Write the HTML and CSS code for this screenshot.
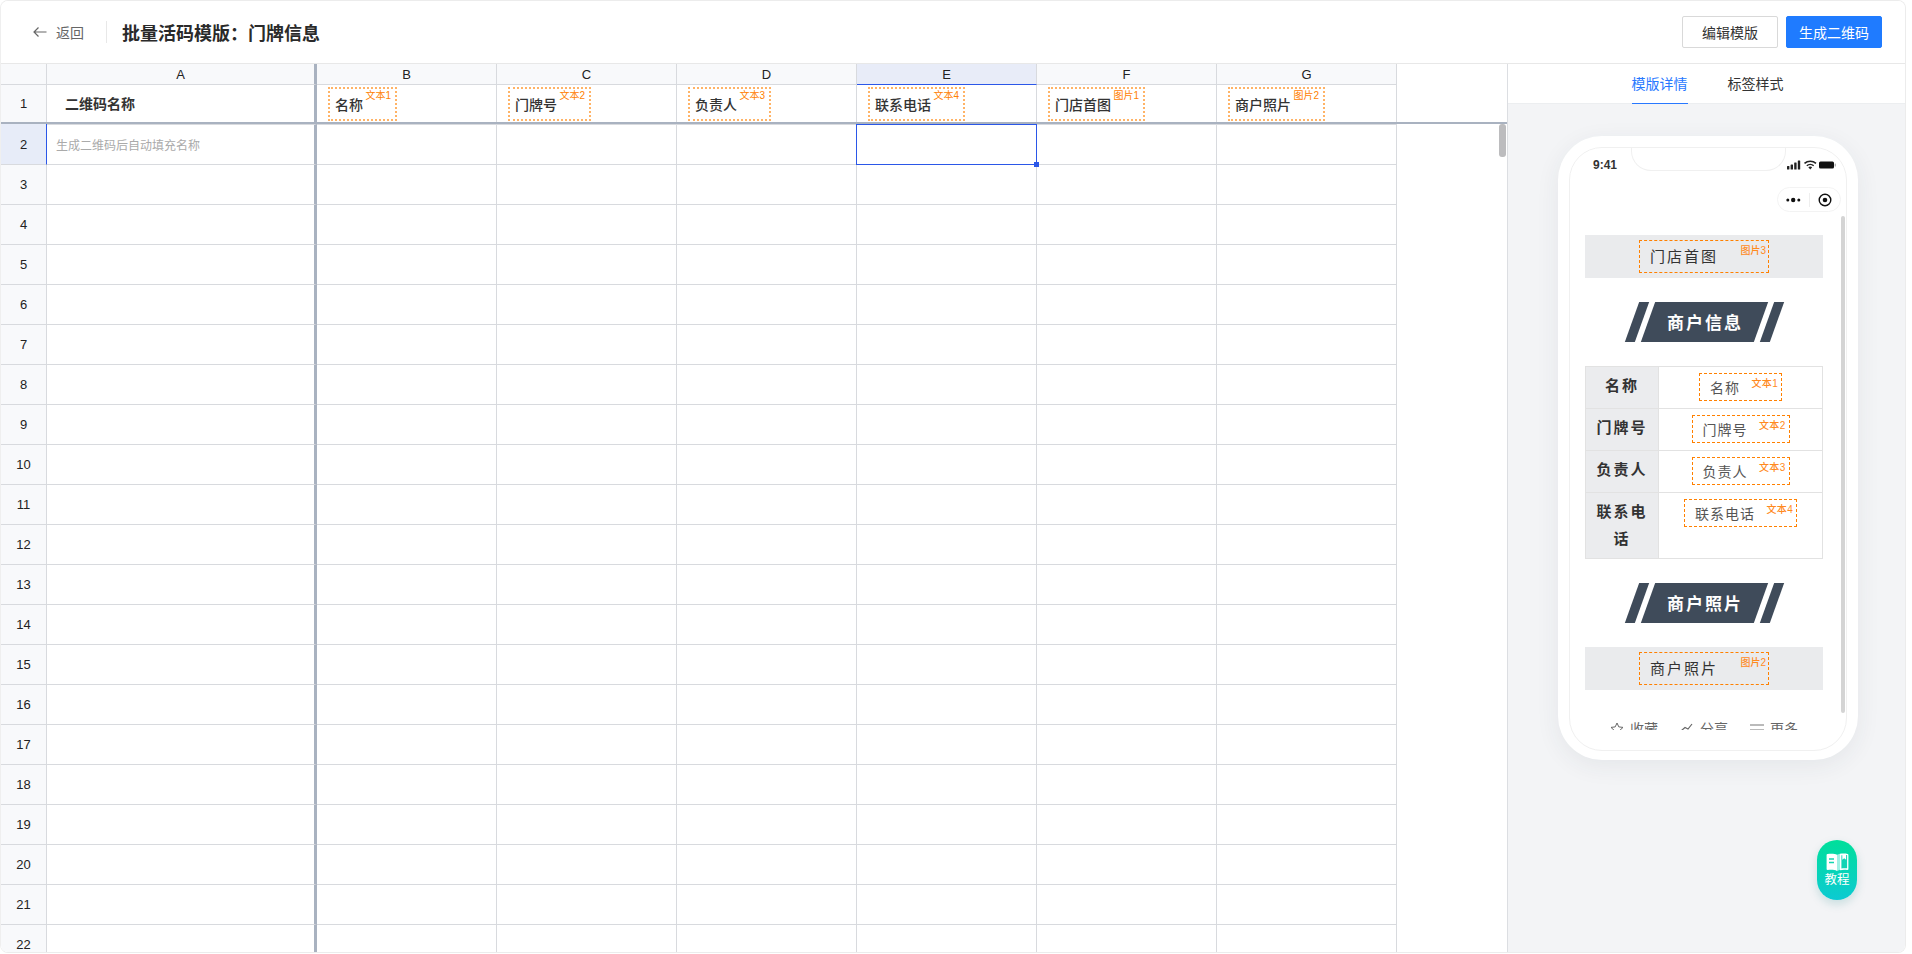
FILE: index.html
```html
<!DOCTYPE html>
<html lang="zh-CN">
<head>
<meta charset="utf-8">
<title>批量活码模版</title>
<link rel="stylesheet" href="styles.css">
</head>
<body>
<div class="app">
  <header class="top">
    <a class="back">
      <svg class="back-icon" viewBox="0 0 14 12" width="14" height="12"><path d="M13.500 6H1M5.500 1.500 1 6l4.500 4.500" fill="none" stroke="#666" stroke-width="1.200"/></svg>
      <span>返回</span>
    </a>
    <span class="divider"></span>
    <h1 class="title">批量活码模版：门牌信息</h1>
    <div class="actions">
      <button class="btn">编辑模版</button>
      <button class="btn primary">生成二维码</button>
    </div>
  </header>
  <main class="main">
    <section class="sheet">
      <div class="row head">
        <div class="rh"></div><div class="c a">A</div><div class="c">B</div><div class="c">C</div><div class="c">D</div><div class="c on">E</div><div class="c">F</div><div class="c">G</div>
      </div>
      <div class="row first">
        <div class="rh">1</div>
        <div class="c a"><span class="name">二维码名称</span></div>
        <div class="c"><span class="chip">名称<i>文本1</i></span></div>
        <div class="c"><span class="chip">门牌号<i>文本2</i></span></div>
        <div class="c"><span class="chip">负责人<i>文本3</i></span></div>
        <div class="c"><span class="chip">联系电话<i>文本4</i></span></div>
        <div class="c"><span class="chip">门店首图<i>图片1</i></span></div>
        <div class="c"><span class="chip">商户照片<i>图片2</i></span></div>
      </div>
      <div class="row second">
        <div class="rh cur">2</div>
        <div class="c a hint">生成二维码后自动填充名称</div>
        <div class="c"></div><div class="c"></div><div class="c"></div><div class="c sel"></div><div class="c"></div><div class="c"></div>
      </div>
      <div class="row"><div class="rh">3</div><div class="c a"></div><div class="c"></div><div class="c"></div><div class="c"></div><div class="c"></div><div class="c"></div><div class="c"></div></div>
      <div class="row"><div class="rh">4</div><div class="c a"></div><div class="c"></div><div class="c"></div><div class="c"></div><div class="c"></div><div class="c"></div><div class="c"></div></div>
      <div class="row"><div class="rh">5</div><div class="c a"></div><div class="c"></div><div class="c"></div><div class="c"></div><div class="c"></div><div class="c"></div><div class="c"></div></div>
      <div class="row"><div class="rh">6</div><div class="c a"></div><div class="c"></div><div class="c"></div><div class="c"></div><div class="c"></div><div class="c"></div><div class="c"></div></div>
      <div class="row"><div class="rh">7</div><div class="c a"></div><div class="c"></div><div class="c"></div><div class="c"></div><div class="c"></div><div class="c"></div><div class="c"></div></div>
      <div class="row"><div class="rh">8</div><div class="c a"></div><div class="c"></div><div class="c"></div><div class="c"></div><div class="c"></div><div class="c"></div><div class="c"></div></div>
      <div class="row"><div class="rh">9</div><div class="c a"></div><div class="c"></div><div class="c"></div><div class="c"></div><div class="c"></div><div class="c"></div><div class="c"></div></div>
      <div class="row"><div class="rh">10</div><div class="c a"></div><div class="c"></div><div class="c"></div><div class="c"></div><div class="c"></div><div class="c"></div><div class="c"></div></div>
      <div class="row"><div class="rh">11</div><div class="c a"></div><div class="c"></div><div class="c"></div><div class="c"></div><div class="c"></div><div class="c"></div><div class="c"></div></div>
      <div class="row"><div class="rh">12</div><div class="c a"></div><div class="c"></div><div class="c"></div><div class="c"></div><div class="c"></div><div class="c"></div><div class="c"></div></div>
      <div class="row"><div class="rh">13</div><div class="c a"></div><div class="c"></div><div class="c"></div><div class="c"></div><div class="c"></div><div class="c"></div><div class="c"></div></div>
      <div class="row"><div class="rh">14</div><div class="c a"></div><div class="c"></div><div class="c"></div><div class="c"></div><div class="c"></div><div class="c"></div><div class="c"></div></div>
      <div class="row"><div class="rh">15</div><div class="c a"></div><div class="c"></div><div class="c"></div><div class="c"></div><div class="c"></div><div class="c"></div><div class="c"></div></div>
      <div class="row"><div class="rh">16</div><div class="c a"></div><div class="c"></div><div class="c"></div><div class="c"></div><div class="c"></div><div class="c"></div><div class="c"></div></div>
      <div class="row"><div class="rh">17</div><div class="c a"></div><div class="c"></div><div class="c"></div><div class="c"></div><div class="c"></div><div class="c"></div><div class="c"></div></div>
      <div class="row"><div class="rh">18</div><div class="c a"></div><div class="c"></div><div class="c"></div><div class="c"></div><div class="c"></div><div class="c"></div><div class="c"></div></div>
      <div class="row"><div class="rh">19</div><div class="c a"></div><div class="c"></div><div class="c"></div><div class="c"></div><div class="c"></div><div class="c"></div><div class="c"></div></div>
      <div class="row"><div class="rh">20</div><div class="c a"></div><div class="c"></div><div class="c"></div><div class="c"></div><div class="c"></div><div class="c"></div><div class="c"></div></div>
      <div class="row"><div class="rh">21</div><div class="c a"></div><div class="c"></div><div class="c"></div><div class="c"></div><div class="c"></div><div class="c"></div><div class="c"></div></div>
      <div class="row"><div class="rh">22</div><div class="c a"></div><div class="c"></div><div class="c"></div><div class="c"></div><div class="c"></div><div class="c"></div><div class="c"></div></div>
      <div class="sheet-thumb"></div>
    </section>
    <aside class="panel">
      <nav class="tabs">
        <span class="tab active">模版详情</span>
        <span class="tab">标签样式</span>
      </nav>
      <div class="phone">
        <div class="screen">
          <div class="notch"></div>
          <div class="status">
            <span class="time">9:41</span>
            <svg width="50" height="10" viewBox="0 0 50 10">
              <g fill="#222"><rect x="0" y="6" width="2.400" height="3.500" rx=".5"/><rect x="3.600" y="4.500" width="2.400" height="5" rx=".5"/><rect x="7.200" y="2.500" width="2.400" height="7" rx=".5"/><rect x="10.800" y="0.500" width="2.400" height="9" rx=".5"/></g>
              <path d="M17.500 3.400a8.500 8.500 0 0 1 11.500 0M19.800 5.800a5 5 0 0 1 6.900 0" fill="none" stroke="#222" stroke-width="1.500"/><path d="M21.300 7.300a3 3 0 0 1 3.900 0L23.250 9.500z" fill="#222"/>
              <rect x="32" y="1.500" width="15" height="7" rx="1.500" fill="#111"/><rect x="47.600" y="3.500" width="1.300" height="3" rx=".6" fill="#aaa"/>
            </svg>
          </div>
          <div class="nav">
            <div class="capsule">
              <svg width="15" height="6" viewBox="0 0 15 6"><g fill="#111"><circle cx="1.800" cy="3" r="1.500"/><circle cx="7.200" cy="3" r="2.200"/><circle cx="12.800" cy="3" r="1.500"/></g></svg>
              <span class="cap-line"></span>
              <svg width="14" height="14" viewBox="0 0 14 14"><circle cx="7" cy="7" r="5.800" fill="none" stroke="#111" stroke-width="1.400"/><circle cx="7" cy="7" r="2.300" fill="#111"/></svg>
            </div>
          </div>
          <div class="content">
            <div class="thumb"></div>
            <div class="pic"><span class="box pic-box"><b>门店首图</b><i>图片3</i></span></div>
            <div class="banner"><span class="stripe"></span><span class="ribbon"><span>商户信息</span></span><span class="stripe"></span></div>
            <table class="info">
              <tr><th>名称</th><td><span class="box val"><b>名称</b><i>文本1</i></span></td></tr>
              <tr><th>门牌号</th><td><span class="box val"><b>门牌号</b><i>文本2</i></span></td></tr>
              <tr><th>负责人</th><td><span class="box val"><b>负责人</b><i>文本3</i></span></td></tr>
              <tr class="tall"><th>联系电话</th><td><span class="box val"><b>联系电话</b><i>文本4</i></span></td></tr>
            </table>
            <div class="banner"><span class="stripe"></span><span class="ribbon"><span>商户照片</span></span><span class="stripe"></span></div>
            <div class="pic"><span class="box pic-box"><b>商户照片</b><i>图片2</i></span></div>
            <div class="tools">
              <span class="tool"><svg width="14" height="14" viewBox="0 0 14 14"><path d="m7 1 1.800 3.900 4.200.5-3.100 2.900.8 4.200L7 10.400l-3.700 2.100.8-4.200L1 5.400l4.200-.5z" fill="none" stroke="#666" stroke-width="1"/></svg>收藏</span>
              <span class="tool"><svg width="14" height="14" viewBox="0 0 14 14"><path d="M1.500 8.500 5 5.500l3 1.500 4-5" fill="none" stroke="#666" stroke-width="1.200"/></svg>分享</span>
              <span class="tool"><svg width="14" height="14" viewBox="0 0 14 14"><path d="M0 3h14M0 8h14" stroke="#777" stroke-width="1.200"/></svg>更多</span>
            </div>
          </div>
        </div>
      </div>
      <div class="guide">
        <svg width="23" height="18" viewBox="0 0 23 18">
          <path d="M11 1.800C9 .6 5 .4 1.500 1A1 1 0 0 0 .6 2v14.200a1 1 0 0 0 1 .8c3.400-.4 7-.3 9.400.9z" fill="#fff"/>
          <path d="M11 1.800 14 .8v16l-3 1.100z" fill="#9ff0e4"/>
          <path d="M14 .8c2.300-.4 5.600-.4 7.600.1a1 1 0 0 1 .8 1v14.300a1 1 0 0 1-1 .8c-2.600-.4-5-.4-7.400.3z" fill="#fff"/>
          <path d="M15.400 2.200h.9v4.600l1.900-1.500 1.900 1.500V2h1v13.300c-1.900-.2-3.800-.2-5.700.1z" fill="#12d3b4"/>
          <path d="M3 6h5M3 9.500h5" stroke="#15d5b0" stroke-width="1.300"/>
        </svg>
        <span class="guide-label">教程</span>
      </div>
    </aside>
  </main>
</div>
</body>
</html>
```
FILE: styles.css
```css
* { box-sizing: border-box; }
html, body { margin: 0; height: 100%; background: #fff; overflow: hidden; }
body { font-family: "Liberation Sans", "Noto Sans CJK SC", sans-serif; color: #333; }

.app {
  width: 1906px; height: 953px;
  border: 1px solid #ececec; border-left-color: #efefef;
  border-radius: 8px; overflow: hidden;
  display: flex; flex-direction: column;
}

/* top bar */
.top {
  flex: none; height: 63px; display: flex; align-items: center;
  padding-left: 32px; padding-right: 23px;
  border-bottom: 1px solid #e8e8e8; background: #fff;
}
.back { display: flex; align-items: center; font-size: 14px; color: #666; }
.back-icon { margin-right: 9px; }
.divider { width: 1px; height: 22px; background: #e8e8e8; margin: 0 15px 0 22px; }
.title { margin: 0; font-size: 18px; font-weight: 700; color: #2a2a2a; }
.actions { margin-left: auto; display: flex; gap: 8px; }
.btn {
  width: 96px; height: 32px; padding: 0; font: inherit; font-size: 14px; color: #333;
  background: #fff; border: 1px solid #d9d9d9; border-radius: 2px;
}
.btn.primary { background: #1f7bff; border-color: #1f7bff; color: #fff; }

/* sheet */
.main { flex: 1; min-height: 0; display: flex; }
.sheet { position: relative; width: 1507px; flex: none; overflow: hidden; background: #fff; border-right: 1px solid #dcdee2; }
.row { display: flex; height: 40px; }
.rh, .c { flex: none; border-bottom: 1px solid #d8dade; border-right: 1px solid #d8dade; }
.rh {
  width: 46px; background: #f8f9fb; font-size: 13px; color: #222;
  display: flex; align-items: center; justify-content: center;
}
.c { width: 180px; }
.c.a { width: 270px; border-right: 3px solid #a9b2c0; }

.head { height: 21px; }
.head .c {
  background: #f8f9fb; font-size: 13px; color: #222;
  display: flex; align-items: center; justify-content: center;
}
.head .c.on { background: #e8ecf8; border-bottom: 1px solid #2b57e8; }

.first { height: 39px; width: 1506px; border-bottom: 2px solid #a9b2c0; }
.first .rh, .first .c { height: 37px; border-bottom: 0; }
.first .c { display: flex; align-items: center; padding-left: 11px; }
.first .c.a { padding-left: 12px; padding-bottom: 1px; }
.name { font-size: 14px; font-weight: 600; color: #333; margin-left: 6px; }
.chip {
  position: relative; display: flex; align-items: center; height: 34px;
  padding: 0 32px 0 5px; font-size: 14px; font-weight: 500; color: #333;
  border: 2px dotted #ffb366;
}
.chip i {
  position: absolute; right: 4px; top: 1px;
  font-style: normal; font-weight: 400; font-size: 10px; line-height: 12px; color: #ff8000;
}

.second { height: 41px; }
.second .c { border-top: 1px solid #d8dade; }
.rh.cur { background: #e7ecf8; border-right: 1px solid #2b57e8; }
.hint { font-size: 12px; color: #aaa; display: flex; align-items: center; padding-left: 9px; }
.second .c.sel { position: relative; border: 1px solid #2b57e8; margin-left: -1px; width: 181px; }
.c.sel::after {
  content: ""; position: absolute; right: -3px; bottom: -3px; width: 5px; height: 5px;
  background: #2b57e8;
}
.sheet-thumb { position: absolute; left: 1498px; top: 60px; width: 7px; height: 33px; background: #bcbcbe; border-radius: 3px; }

/* right panel */
.panel { position: relative; flex: 1; background: #f3f4f6; min-width: 0; }
.tabs {
  height: 40px; background: #fff; border-bottom: 1px solid #eceef0; padding-left: 2px;
  display: flex; justify-content: center; gap: 40px; font-size: 14px;
}
.tab { height: 40px; line-height: 40px; color: #333; }
.tab.active { color: #2878ff; border-bottom: 1px solid #2878ff; }

.phone {
  width: 300px; height: 624px; margin: 32px 0 0 50px; padding: 11px;
  background: #fff; border-radius: 44px; box-shadow: 0 6px 24px rgba(40, 50, 70, .07);
}
.screen {
  position: relative; width: 278px; height: 604px; overflow: hidden;
  border: 1px solid #f0f0f0; border-radius: 33px;
}
.notch {
  position: absolute; left: 61px; top: -1px; width: 155px; height: 24px;
  border: 1px solid #f0f0f0; border-top: 0; border-radius: 0 0 20px 20px; background: #fff;
}
.status { position: relative; height: 36px; padding: 0 9px 2px 23px; display: flex; justify-content: space-between; align-items: center; }
.time { font-size: 12px; font-weight: 700; color: #333; }
.nav { height: 32px; padding: 3px 5px 0 0; display: flex; justify-content: flex-end; align-items: flex-start; }
.capsule {
  width: 64px; height: 25px; border: 1px solid #f3f3f3; border-radius: 13px;
  display: flex; align-items: center; justify-content: center; gap: 8px;
}
.cap-line { width: 1px; height: 14px; background: #eee; }

.content { position: relative; height: 514px; overflow: hidden; padding: 19px 0 0 15px; }
.thumb { position: absolute; left: 271px; top: 0; width: 4px; height: 497px; background: #d4d4d4; border-radius: 2px; }

.box { position: relative; display: inline-block; border: 1px dashed #ff8000; text-align: left; color: #444; }
.box b { font-weight: 400; }
.box i { position: absolute; font-style: normal; font-size: 10px; line-height: 12px; color: #ff8a1e; white-space: nowrap; }

.pic { width: 238px; height: 43px; background: #eaebed; display: flex; justify-content: center; align-items: center; }
.pic-box { width: 130px; height: 33px; padding-left: 10px; font-size: 15px; line-height: 31px; letter-spacing: 2px; color: #333; }
.pic-box i { right: 2px; top: 4px; letter-spacing: 0; font-weight: 500; }

.banner { width: 238px; height: 40px; margin: 24px 0; display: flex; justify-content: center; gap: 6px; }
.stripe { width: 10px; height: 40px; background: #3f4b5a; transform: skewX(-19.7deg); }
.ribbon { position: relative; width: 113px; height: 40px; display: flex; align-items: center; justify-content: center; }
.ribbon::before { content: ""; position: absolute; inset: 0; background: #3f4b5a; transform: skewX(-19.7deg); }
.ribbon span { position: relative; font-size: 17px; font-weight: 700; color: #fff; letter-spacing: 2px; margin: 0 -2px 2px 0; }

.info { width: 238px; border-collapse: collapse; table-layout: fixed; }
.info th, .info td { border: 1px solid #e2e2e2; height: 42px; vertical-align: top; }
.info th {
  width: 73px; background: #ebecee; padding: 5px 5px 0; font-size: 15px; line-height: 27px;
  font-weight: 700; letter-spacing: 2px; color: #333; text-align: center;
}
.info td { padding: 6px 0 0; text-align: center; }
.info .tall th, .info .tall td { height: 66px; }
.val { height: 28px; padding: 0 41px 0 10px; font-size: 14px; line-height: 28px; letter-spacing: 1px; color: #555; vertical-align: top; white-space: nowrap; }
.val i { right: 3px; top: 4px; letter-spacing: .3px; font-weight: 500; }

.tools {
  width: 238px; margin-top: 29px; display: flex; justify-content: center; gap: 22px;
  font-size: 14px; line-height: 20px; color: #666;
}
.tool { display: flex; align-items: flex-start; gap: 6px; }
.tool svg { margin-top: 3px; }

.guide {
  position: absolute; left: 309px; top: 776px; width: 40px; height: 60px; border-radius: 20px;
  background: linear-gradient(180deg, #00df9a, #0ccad2);
  box-shadow: 0 4px 10px rgba(0, 120, 120, .18);
  display: flex; flex-direction: column; align-items: center; padding-top: 13px;
  color: #fff; font-size: 12.5px; line-height: 16px;
}
.guide-label { margin-top: 1px; }
```
